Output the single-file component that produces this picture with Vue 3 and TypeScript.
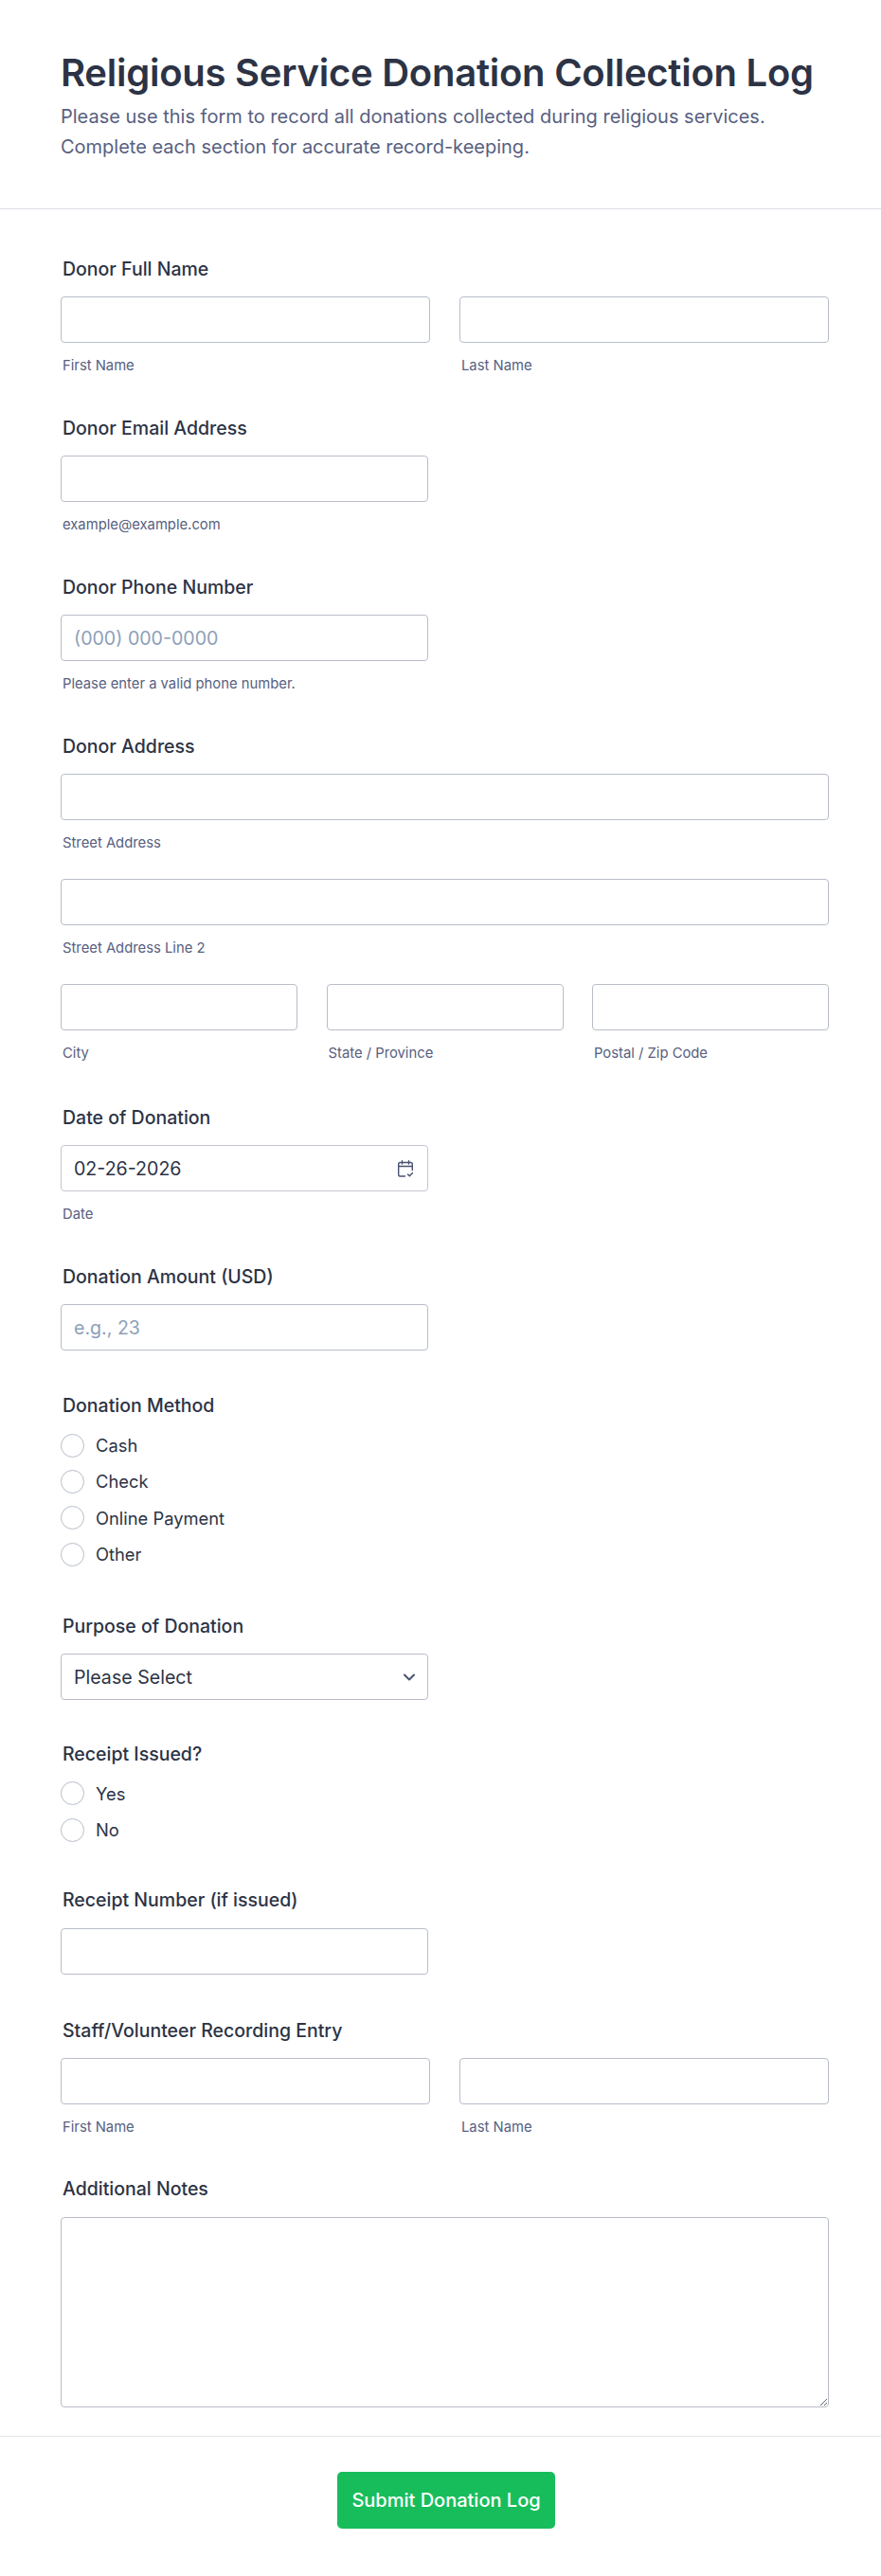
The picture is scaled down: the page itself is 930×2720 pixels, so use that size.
<script setup lang="ts">
const methods = ["Cash", "Check", "Online Payment", "Other"];
const receipt = ["Yes", "No"];
</script>

<template>
  <div class="page">
    <header class="head">
      <h1>Religious Service Donation Collection Log</h1>
      <p>
        Please use this form to record all donations collected during religious services.<br />
        Complete each section for accurate record-keeping.
      </p>
    </header>

    <form class="body" @submit.prevent>
      <div class="field">
        <label>Donor Full Name</label>
        <div class="pair">
          <div><input type="text" /><small>First Name</small></div>
          <div><input type="text" /><small>Last Name</small></div>
        </div>
      </div>

      <div class="field half">
        <label>Donor Email Address</label>
        <input type="text" />
        <small>example@example.com</small>
      </div>

      <div class="field half">
        <label>Donor Phone Number</label>
        <input type="text" placeholder="(000) 000-0000" />
        <small>Please enter a valid phone number.</small>
      </div>

      <div class="field address">
        <label>Donor Address</label>
        <input type="text" />
        <small>Street Address</small>
        <input type="text" class="next" />
        <small>Street Address Line 2</small>
        <div class="triple next">
          <div><input type="text" /><small>City</small></div>
          <div><input type="text" /><small>State / Province</small></div>
          <div><input type="text" /><small>Postal / Zip Code</small></div>
        </div>
      </div>

      <div class="field half">
        <label>Date of Donation</label>
        <div class="box date">
          <span>02-26-2026</span>
          <svg width="16" height="18" viewBox="0 0 16 18" fill="none" stroke="#4a5170" stroke-width="1.400" stroke-linecap="round" stroke-linejoin="round">
            <path d="M7.500 17H2.200A1.500 1.500 0 0 1 .7 15.500V4A1.500 1.500 0 0 1 2.200 2.500h11.600A1.500 1.500 0 0 1 15.300 4v6.500" />
            <path d="M.7 6.500h14.600M4.500.7v3.400M11.500.7v3.400" />
            <path d="M10.500 15l1.800 1.800 3.200-3.200" />
          </svg>
        </div>
        <small>Date</small>
      </div>

      <div class="field half no-sub">
        <label>Donation Amount (USD)</label>
        <input type="text" placeholder="e.g., 23" />
      </div>

      <div class="field choices">
        <label>Donation Method</label>
        <div v-for="m in methods" :key="m" class="radio"><i></i>{{ m }}</div>
      </div>

      <div class="field half no-sub purpose">
        <label>Purpose of Donation</label>
        <div class="box select">
          <span>Please Select</span>
          <svg width="12" height="8" viewBox="0 0 12 8" fill="none" stroke="#4a5170" stroke-width="2" stroke-linecap="round" stroke-linejoin="round">
            <path d="M1 1.500 6 6.500l5-5" />
          </svg>
        </div>
      </div>

      <div class="field choices issued">
        <label>Receipt Issued?</label>
        <div v-for="r in receipt" :key="r" class="radio"><i></i>{{ r }}</div>
      </div>

      <div class="field half no-sub number">
        <label>Receipt Number (if issued)</label>
        <input type="text" />
      </div>

      <div class="field staff">
        <label>Staff/Volunteer Recording Entry</label>
        <div class="pair">
          <div><input type="text" /><small>First Name</small></div>
          <div><input type="text" /><small>Last Name</small></div>
        </div>
      </div>

      <div class="field notes">
        <label>Additional Notes</label>
        <textarea></textarea>
      </div>
    </form>

    <footer class="foot">
      <button type="button">Submit Donation Log</button>
    </footer>
  </div>
</template>

<style scoped>
.page {
  width: 930px;
  height: 2720px;
  background: #fff;
  color: #2c3345;
  font-family: Inter, "Liberation Sans", sans-serif;
  box-sizing: border-box;
}

.head {
  height: 221px;
  padding: 51px 64px 0;
  box-sizing: border-box;
  border-bottom: 1px solid #dcdde6;
}

h1 {
  margin: 0 0 4px;
  font-size: 40px;
  line-height: 52px;
  font-weight: 600;
  letter-spacing: -0.25px;
  white-space: nowrap;
  color: #2c3345;
}

.head p {
  margin: 0;
  font-size: 20px;
  line-height: 32px;
  color: #57607f;
}

.body {
  padding: 48px 55px 0 64px;
  display: flex;
  flex-direction: column;
}

.field {
  display: flex;
  flex-direction: column;
  height: 168px;
}

.field.address {
  height: 392px;
}

.field.no-sub {
  height: 136px;
}

.field.purpose {
  height: 134.500px;
}

.field.number {
  height: 138px;
}

.field.staff {
  height: 167px;
}

.field.choices {
  height: auto;
  padding-bottom: 42px;
}

.field.issued {
  padding-bottom: 40px;
}

.field.choices label {
  margin-bottom: 8px;
}

.field.number label,
.field.notes label {
  margin-bottom: 15px;
}

.field.half > input,
.field.half > .box {
  width: 388px;
}

label {
  display: block;
  height: 30px;
  padding-left: 2px;
  margin-bottom: 14px;
  font-size: 19.500px;
  line-height: 30px;
  font-weight: 500;
  color: #2c3345;
}

input,
textarea,
.box {
  display: block;
  width: 100%;
  height: 49px;
  margin: 0;
  padding: 0 13px;
  box-sizing: border-box;
  background: #fff;
  border: 1px solid #b8bdc9;
  border-radius: 4px;
  font-family: inherit;
  font-size: 19.600px;
  color: #2c3345;
  outline: none;
}

input::placeholder {
  color: #8d9fb8;
}

.box {
  display: flex;
  align-items: center;
  justify-content: space-between;
}

.box svg {
  flex: none;
}

.box.date {
  padding-right: 15px;
  border-color: #c3c7d2;
}

small {
  display: block;
  margin-top: 13px;
  padding-left: 2px;
  font-size: 14.800px;
  line-height: 22px;
  color: #57607f;
}

.pair {
  display: grid;
  grid-template-columns: 390px 390px;
  column-gap: 31px;
}

.triple {
  display: grid;
  grid-template-columns: repeat(3, 250px);
  column-gap: 30.500px;
}

.next {
  margin-top: 27px;
}

.radio {
  display: flex;
  align-items: center;
  gap: 12px;
  height: 38.300px;
  font-size: 18.350px;
  color: #2c3345;
}

.radio i {
  display: block;
  width: 25px;
  height: 25px;
  box-sizing: border-box;
  border: 1px solid #b8bdc9;
  border-radius: 50%;
}

textarea {
  height: 201px;
}

.notes {
  height: 252px;
}

.foot {
  margin-top: 24px;
  border-top: 1px solid #e3e5ec;
  display: flex;
  justify-content: center;
  padding: 37px 0 0 12px;
}

button {
  width: 230px;
  height: 60px;
  border: 0;
  border-radius: 5px;
  background: #18bd5b;
  color: #fff;
  font-family: inherit;
  font-size: 20px;
  font-weight: 500;
}
</style>
